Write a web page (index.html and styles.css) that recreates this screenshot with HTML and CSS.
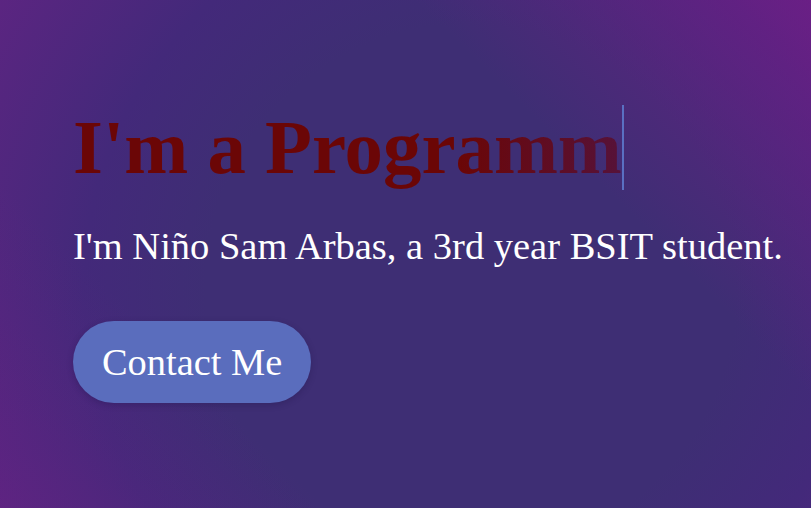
FILE: index.html
```html
<!DOCTYPE html>
<html lang="en">
<head>
<meta charset="utf-8">
<title>Niño Sam Arbas</title>
<link rel="stylesheet" href="styles.css">
</head>
<body>
<main class="hero">
  <div class="hero-content">
    <h1 class="typed"><span class="typed-text">I'm a Programm</span></h1>
    <p class="intro">I'm Niño Sam Arbas, a 3rd year BSIT student.</p>
    <a class="btn" href="#contact">Contact Me</a>
  </div>
</main>
</body>
</html>
```
FILE: styles.css
```css
html, body {
  margin: 0;
  padding: 0;
  height: 100%;
}
body {
  font-family: "Liberation Serif", "Times New Roman", serif;
  background:
    linear-gradient(45deg, rgba(112, 30, 134, 0.3) 0%, rgba(112, 30, 134, 0) 25%, rgba(112, 30, 134, 0) 70%, rgba(116, 28, 136, 0.75) 100%),
    radial-gradient(circle at 58% 57%, #3e2e74 0%, #3e2e74 48%, #43297a 70%, #5b2581 100%);
  overflow: hidden;
}
.hero {
  height: 100vh;
  display: flex;
  align-items: center;
}
.hero-content {
  padding-left: 73px;
  display: flex;
  flex-direction: column;
  align-items: flex-start;
}
.typed {
  margin: 0;
  font-size: 76.8px;
  font-weight: bold;
  line-height: 85px;
}
.typed-text {
  display: inline-block;
  vertical-align: top;
  white-space: nowrap;
  border-right: 2px solid #5a70c2;
  background: linear-gradient(to right, #6b0606 0%, #6b0606 70%, #561239 100%);
  -webkit-background-clip: text;
  background-clip: text;
  color: transparent;
}
.intro {
  margin: 34px 0 0;
  font-size: 38.5px;
  color: #ffffff;
}
.btn {
  margin-top: 53px;
  display: inline-block;
  padding: 19px 29px;
  font-size: 38.4px;
  color: #ffffff;
  text-decoration: none;
  background: #5a6dbd;
  border-radius: 41px;
  box-shadow: 0 2px 6px rgba(30, 20, 70, 0.3);
}
```
